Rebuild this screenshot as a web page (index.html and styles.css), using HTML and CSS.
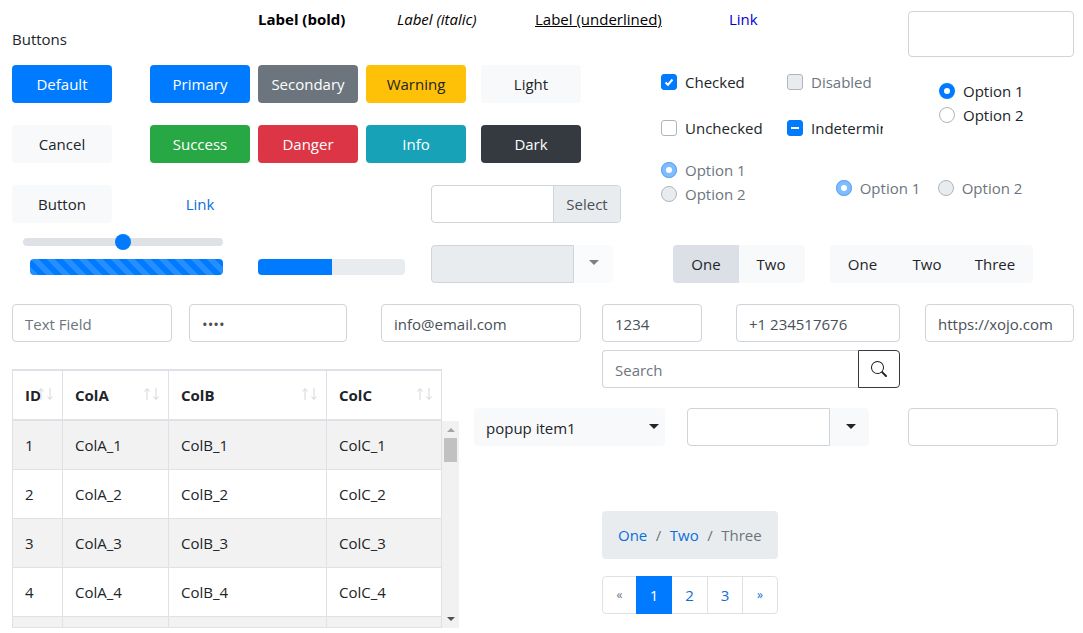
FILE: index.html
```html
<!DOCTYPE html>
<html lang="en">
<head>
<meta charset="utf-8">
<title>Controls</title>
<link rel="stylesheet" href="styles.css">
</head>
<body>
<main class="page">
  <section class="top-row">
    <div class="buttons-title">Buttons</div>
    <div class="label label-bold">Label (bold)</div>
    <div class="label label-italic">Label (italic)</div>
    <div class="label label-under">Label (underlined)</div>
    <a class="label label-link">Link</a>
    <div class="textarea"></div>
  </section>

  <section class="mid-row">
    <div class="left-block">
      <div class="btn-row">
        <button class="btn primary">Default</button>
        <button class="btn primary col2">Primary</button>
        <button class="btn secondary col3">Secondary</button>
        <button class="btn warning col3">Warning</button>
        <button class="btn light col5">Light</button>
      </div>
      <div class="btn-row">
        <button class="btn light">Cancel</button>
        <button class="btn success col2">Success</button>
        <button class="btn danger col3">Danger</button>
        <button class="btn info col3">Info</button>
        <button class="btn dark col5">Dark</button>
      </div>
      <div class="btn-row">
        <button class="btn light">Button</button>
        <button class="btn linkbtn col2">Link</button>
        <div class="input-group">
          <div class="ig-input"></div>
          <div class="ig-addon">Select</div>
        </div>
      </div>
      <div class="meter-row">
        <div class="meters">
          <div class="slider"><span class="slider-thumb"></span></div>
          <div class="progress striped"></div>
        </div>
        <div class="progress plain"><span class="progress-bar"></span></div>
        <div class="combo-disabled">
          <div class="combo-disabled-input"></div>
          <div class="combo-disabled-arrow"><span class="caret caret-grey"></span></div>
        </div>
      </div>
    </div>

    <div class="right-block">
      <div class="checks-row">
        <div class="checks">
          <label class="check"><span class="box box-on"><svg viewBox="0 0 14 14" class="box-icon"><path d="M3.500 7.400 6 9.700 10.500 4.500" fill="none" stroke="#fff" stroke-width="2"/></svg></span>Checked</label>
          <label class="check is-disabled"><span class="box box-disabled"></span>Disabled</label>
          <label class="check"><span class="box"></span>Unchecked</label>
          <label class="check check-clip"><span class="box box-on"><svg viewBox="0 0 14 14" class="box-icon"><path d="M3 7h8" fill="none" stroke="#fff" stroke-width="2"/></svg></span><span class="clip-text">Indeterminate</span></label>
        </div>
        <div class="radio-stack radio-stack-a">
          <label class="radio"><span class="dot dot-on"></span>Option 1</label>
          <label class="radio"><span class="dot"></span>Option 2</label>
        </div>
      </div>
      <div class="radios-row">
        <div class="radio-stack">
          <label class="radio is-disabled"><span class="dot dot-on-dis"></span>Option 1</label>
          <label class="radio is-disabled"><span class="dot dot-dis"></span>Option 2</label>
        </div>
        <div class="radio-inline">
          <label class="radio is-disabled"><span class="dot dot-on-dis"></span>Option 1</label>
          <label class="radio is-disabled"><span class="dot dot-dis"></span>Option 2</label>
        </div>
      </div>
      <div class="segments-row">
        <div class="segmented seg-a">
          <span class="seg seg-active">One</span>
          <span class="seg seg-two">Two</span>
        </div>
        <div class="segmented seg-b">
          <span class="seg seg-b1">One</span>
          <span class="seg seg-b2">Two</span>
          <span class="seg seg-b3">Three</span>
        </div>
      </div>
    </div>
  </section>

  <section class="fields-row">
    <div class="field f-text placeholder">Text Field</div>
    <div class="field f-pass"><span class="dots">••••</span></div>
    <div class="field f-email">info@email.com</div>
    <div class="field f-num">1234</div>
    <div class="field f-tel">+1 234517676</div>
    <div class="field f-url">https://xojo.com</div>
  </section>

  <section class="bottom-row">
    <div class="table-wrap">
      <table class="grid grid-head">
        <colgroup><col class="c-id"><col class="c-a"><col class="c-b"><col class="c-c"></colgroup>
        <thead>
          <tr>
            <th>ID<svg class="sort" viewBox="0 0 20 14"><path d="M4 13V2M1.500 4.500 4 1.500 6.500 4.500M13 1v11M10.500 9.500 13 12.500 15.500 9.500" fill="none" stroke="#d4d6d8" stroke-width="1"/></svg></th>
            <th>ColA<svg class="sort" viewBox="0 0 20 14"><path d="M4 13V2M1.500 4.500 4 1.500 6.500 4.500M13 1v11M10.500 9.500 13 12.500 15.500 9.500" fill="none" stroke="#d4d6d8" stroke-width="1"/></svg></th>
            <th>ColB<svg class="sort" viewBox="0 0 20 14"><path d="M4 13V2M1.500 4.500 4 1.500 6.500 4.500M13 1v11M10.500 9.500 13 12.500 15.500 9.500" fill="none" stroke="#d4d6d8" stroke-width="1"/></svg></th>
            <th>ColC<svg class="sort" viewBox="0 0 20 14"><path d="M4 13V2M1.500 4.500 4 1.500 6.500 4.500M13 1v11M10.500 9.500 13 12.500 15.500 9.500" fill="none" stroke="#d4d6d8" stroke-width="1"/></svg></th>
          </tr>
        </thead>
      </table>
      <div class="grid-body-row">
        <div class="grid-clip">
          <table class="grid grid-body">
            <colgroup><col class="c-id"><col class="c-a"><col class="c-b"><col class="c-c"></colgroup>
            <tbody>
              <tr class="odd"><td>1</td><td>ColA_1</td><td>ColB_1</td><td>ColC_1</td></tr>
              <tr><td>2</td><td>ColA_2</td><td>ColB_2</td><td>ColC_2</td></tr>
              <tr class="odd"><td>3</td><td>ColA_3</td><td>ColB_3</td><td>ColC_3</td></tr>
              <tr><td>4</td><td>ColA_4</td><td>ColB_4</td><td>ColC_4</td></tr>
              <tr class="odd"><td></td><td></td><td></td><td></td></tr>
            </tbody>
          </table>
        </div>
        <div class="scrollbar">
          <span class="sb-up"></span>
          <span class="sb-thumb"></span>
          <span class="sb-down"></span>
        </div>
      </div>
    </div>

    <div class="bottom-right">
      <div class="search-line">
        <div class="search">
          <div class="search-input">Search</div>
          <div class="search-btn"><svg viewBox="0 0 16 16" class="search-icon"><path d="M11.742 10.344a6.500 6.500 0 1 0-1.397 1.398h-.001c.03.04.062.078.098.115l3.850 3.850a1 1 0 0 0 1.415-1.414l-3.850-3.850a1.007 1.007 0 0 0-.115-.1zM12 6.500a5.500 5.500 0 1 1-11 0 5.500 5.500 0 0 1 11 0z" fill="#212529"/></svg></div>
        </div>
      </div>
      <div class="popups-row">
        <div class="popup">popup item1<span class="caret caret-dark caret-popup"></span></div>
        <div class="combo">
          <div class="combo-input"></div>
          <div class="combo-arrow"><span class="caret caret-dark"></span></div>
        </div>
        <div class="field f-last"></div>
      </div>
      <nav class="crumbs">
        <a class="crumb-link">One</a><span class="crumb-sep">/</span><a class="crumb-link">Two</a><span class="crumb-sep">/</span><span class="crumb-cur">Three</span>
      </nav>
      <div class="pager">
        <span class="pg pg-prev">«</span>
        <span class="pg pg-on">1</span>
        <span class="pg pg-2">2</span>
        <span class="pg pg-3">3</span>
        <span class="pg pg-next">»</span>
      </div>
    </div>
  </section>
</main>
</body>
</html>
```
FILE: styles.css
```css
* { box-sizing: border-box; }
html, body { margin: 0; padding: 0; height: 100%; overflow: hidden; background: #fff; }
body { font: 15px/22px "Open Sans", "Noto Sans", sans-serif; color: #212529; }
.page { width: 1083px; height: 633px; }

/* top labels */
.top-row { display: flex; height: 65px; align-items: flex-start; }
.buttons-title { margin: 28px 0 0 12px; width: 246px; }
.label { margin-top: 8px; color: #000; }
.label-bold { width: 139px; font-weight: 700; }
.label-italic { width: 138px; font-style: italic; }
.label-under { width: 194px; text-decoration: underline; }
.label-link { width: 179px; color: #0000d4; }
.textarea { width: 166px; height: 46px; margin-top: 11px; border: 1px solid #ced4da; border-radius: 4px; background: #fff; }

.mid-row { display: flex; height: 218px; }
.left-block { width: 649px; padding-left: 12px; }
.btn-row { display: flex; height: 38px; margin-bottom: 22px; }
.btn {
  width: 100px; height: 38px; padding: 0; border: 1px solid transparent; border-radius: 4px;
  font: inherit; line-height: 36px; text-align: center; color: #fff;
}
.col2 { margin-left: 38px; }
.col3 { margin-left: 8px; }
.col5 { margin-left: 15px; }
.primary { background: #007bff; }
.secondary { background: #6c757d; }
.warning { background: #ffc107; color: #212529; }
.light { background: #f8f9fa; color: #212529; }
.success { background: #28a745; }
.danger { background: #dc3545; }
.info { background: #17a2b8; }
.dark { background: #343a40; }
.linkbtn { background: transparent; color: #0a6fdc; }

.input-group { display: flex; width: 190px; height: 38px; margin-left: 181px; border: 1px solid #ced4da; border-radius: 4px; overflow: hidden; }
.ig-input { flex: 1; }
.ig-addon { width: 67px; background: #e9ecef; border-left: 1px solid #ced4da; color: #495057; text-align: center; line-height: 36px; }

.meter-row { display: flex; margin-top: -22px; height: 60px; }
.meters { width: 246px; padding-top: 15px; }
.slider { position: relative; width: 200px; height: 8px; margin: 0 0 0 11px; background: #dee2e6; border-radius: 4px; }
.slider-thumb { position: absolute; left: 92px; top: -4px; width: 16px; height: 16px; border-radius: 50%; background: #007bff; }
.progress { height: 16px; border-radius: 4px; background: #e9ecef; overflow: hidden; }
.striped {
  width: 193px; margin: 13px 0 0 18px; background-color: #007bff;
  background-image: linear-gradient(45deg, rgba(255,255,255,.15) 25%, transparent 25%, transparent 50%, rgba(255,255,255,.15) 50%, rgba(255,255,255,.15) 75%, transparent 75%, transparent);
  background-size: 16px 16px;
}
.plain { width: 147px; margin-top: 36px; }
.progress-bar { display: block; width: 50%; height: 100%; background: #007bff; }
.combo-disabled { display: flex; width: 182px; height: 38px; margin: 22px 0 0 26px; }
.combo-disabled-input { width: 143px; background: #e9ecef; border: 1px solid #ced4da; border-radius: 4px 0 0 4px; }
.combo-disabled-arrow { flex: 1; display: flex; align-items: center; justify-content: center; padding-bottom: 3px; background: #fafbfc; border-radius: 0 4px 4px 0; }
.caret { display: block; width: 0; height: 0; border-style: solid; border-width: 5px 5px 0; border-color: #212529 transparent transparent; }
.caret-grey { border-top-color: #7a8086; }

/* right block */
.right-block { width: 425px; }
.checks-row { display: flex; padding-left: 12px; height: 86px; }
.checks { display: grid; grid-template-columns: 126px 96px; grid-auto-rows: 46px; margin-top: 5px; }
.check, .radio { display: flex; align-items: center; height: 24px; white-space: nowrap; }
.box { flex: none; width: 16px; height: 16px; margin-right: 8px; border: 1px solid #adb5bd; border-radius: 3px; background: #fff; }
.box-on { background: #007bff; border-color: #007bff; }
.box-disabled { background: #e9ecef; border-color: #adb5bd; }
.box-icon { display: block; width: 14px; height: 14px; }
.is-disabled { color: #6c757d; }
.check-clip { overflow: hidden; width: 96px; }
.radio-stack-a { margin: 14px 0 0 56px; }
.dot { flex: none; width: 16px; height: 16px; margin-right: 8px; border: 1px solid #adb5bd; border-radius: 50%; background: #fff; }
.dot-on { border: 5px solid #007bff; }
.dot-on-dis { border: 5px solid #80bdff; outline: 1px solid #5ba4f5; outline-offset: -1px; }
.dot-dis { background: #e9ecef; }

.radios-row { display: flex; padding: 7px 0 0 12px; height: 94px; }
.radio-inline { display: flex; margin: 18px 0 0 90px; height: 24px; }
.radio-inline .radio { width: 102px; }

.segments-row { display: flex; padding-left: 24px; height: 38px; }
.segmented { display: flex; height: 38px; border-radius: 4px; overflow: hidden; background: #f8f9fa; line-height: 38px; }
.seg-a { width: 132px; }
.seg-b { width: 203px; margin-left: 25px; }
.seg { display: block; text-align: center; }
.seg-active { width: 66px; background: #dae0e5; }
.seg-two { width: 64px; }
.seg-b1 { width: 65px; }
.seg-b2 { width: 64px; }
.seg-b3 { width: 72px; }

/* fields */
.field { height: 38px; border: 1px solid #ced4da; border-radius: 4px; padding: 0 12px; line-height: 38px; color: #495057; background: #fff; white-space: nowrap; }
.placeholder { color: #6c757d; }
.fields-row { display: flex; padding: 21px 0 0 12px; height: 80px; }
.f-text { width: 160px; }
.f-pass { width: 158px; margin-left: 17px; }
.f-email { width: 200px; margin-left: 34px; }
.f-num { width: 100px; margin-left: 21px; }
.f-tel { width: 164px; margin-left: 34px; }
.f-url { width: 149px; margin-left: 25px; }

/* bottom */
.bottom-row { display: flex; margin-top: -13px; padding-left: 12px; height: 283px; }
.table-wrap { width: 447px; padding-top: 19px; }
.grid { border-collapse: collapse; table-layout: fixed; width: 429px; background: #fff; }
.c-id { width: 50px; }
.c-a { width: 106px; }
.c-b { width: 158px; }
.c-c { width: 115px; }
.grid th, .grid td { border: 1px solid #dee2e6; padding: 0 0 0 12px; text-align: left; }
.grid-head th { position: relative; height: 50px; border-top-width: 2px; border-bottom-width: 2px; font-weight: 700; }
.sort { position: absolute; right: 5px; top: 16px; width: 20px; height: 14px; }
.grid-body td { height: 49px; }
.grid-body .odd td { background: #f2f2f2; }
.grid-body-row { display: flex; height: 207px; }
.grid-clip { width: 430px; height: 207px; overflow: hidden; border-bottom: 1px solid #dee2e6; }
.grid-body { margin-top: -1px; }
.scrollbar { position: relative; width: 17px; height: 207px; background: #f1f1f1; }
.sb-thumb { position: absolute; left: 2px; top: 17px; width: 13px; height: 24px; background: #c1c1c1; }
.sb-up, .sb-down { position: absolute; left: 5px; width: 0; height: 0; border-style: solid; border-color: transparent; }
.sb-up { top: 7px; border-width: 0 4px 4px; border-bottom-color: #a3a3a3; }
.sb-down { bottom: 7px; border-width: 4px 4px 0; border-top-color: #505050; }

.bottom-right { flex: 1; }
.search-line { padding-left: 143px; height: 58px; }
.search { display: flex; width: 298px; height: 38px; }
.search-input { flex: 1; border: 1px solid #ced4da; border-right: 0; border-radius: 4px 0 0 4px; padding: 0 12px; line-height: 38px; color: #6c757d; }
.search-btn { width: 42px; display: flex; align-items: center; justify-content: center; border: 1px solid #343a40; border-radius: 0 4px 4px 0; }
.search-icon { width: 16px; height: 16px; }

.popups-row { display: flex; height: 103px; padding-left: 15px; }
.popup { display: flex; align-items: center; justify-content: space-between; width: 191px; height: 38px; padding: 2px 6px 0 12px; background: #f8f9fa; border-radius: 4px; }
.caret-popup { margin-bottom: 4px; }
.combo { display: flex; width: 182px; height: 38px; margin-left: 22px; }
.combo-input { width: 143px; border: 1px solid #ced4da; border-radius: 4px 0 0 4px; }
.combo-arrow { flex: 1; display: flex; align-items: center; justify-content: center; padding: 0 0 2px 2px; background: #f8f9fa; border-radius: 0 4px 4px 0; }
.f-last { width: 150px; margin-left: 39px; }

.crumbs { display: flex; align-items: center; width: 176px; height: 48px; margin-left: 143px; padding: 0 13px 0 16px; background: #e9ecef; border-radius: 4px; color: #6c757d; }
.crumb-link { color: #0a6fdc; }
.crumb-sep { margin: 0 8.5px; }
.pager { display: flex; width: 176px; height: 38px; margin: 17px 0 0 143px; border: 1px solid #dee2e6; border-radius: 4px; color: #0a6fdc; }
.pg { display: block; text-align: center; line-height: 36px; border-left: 1px solid #dee2e6; }
.pg-prev { width: 33px; border-left: 0; color: #6c757d; font-size: 12px; }
.pg-on { width: 36px; margin: -1px 0; height: 38px; line-height: 38px; background: #007bff; color: #fff; border-left: 0; }
.pg-2 { width: 35px; border-left: 0; }
.pg-3 { width: 35px; }
.pg-next { width: 35px; font-size: 12px; }
```
